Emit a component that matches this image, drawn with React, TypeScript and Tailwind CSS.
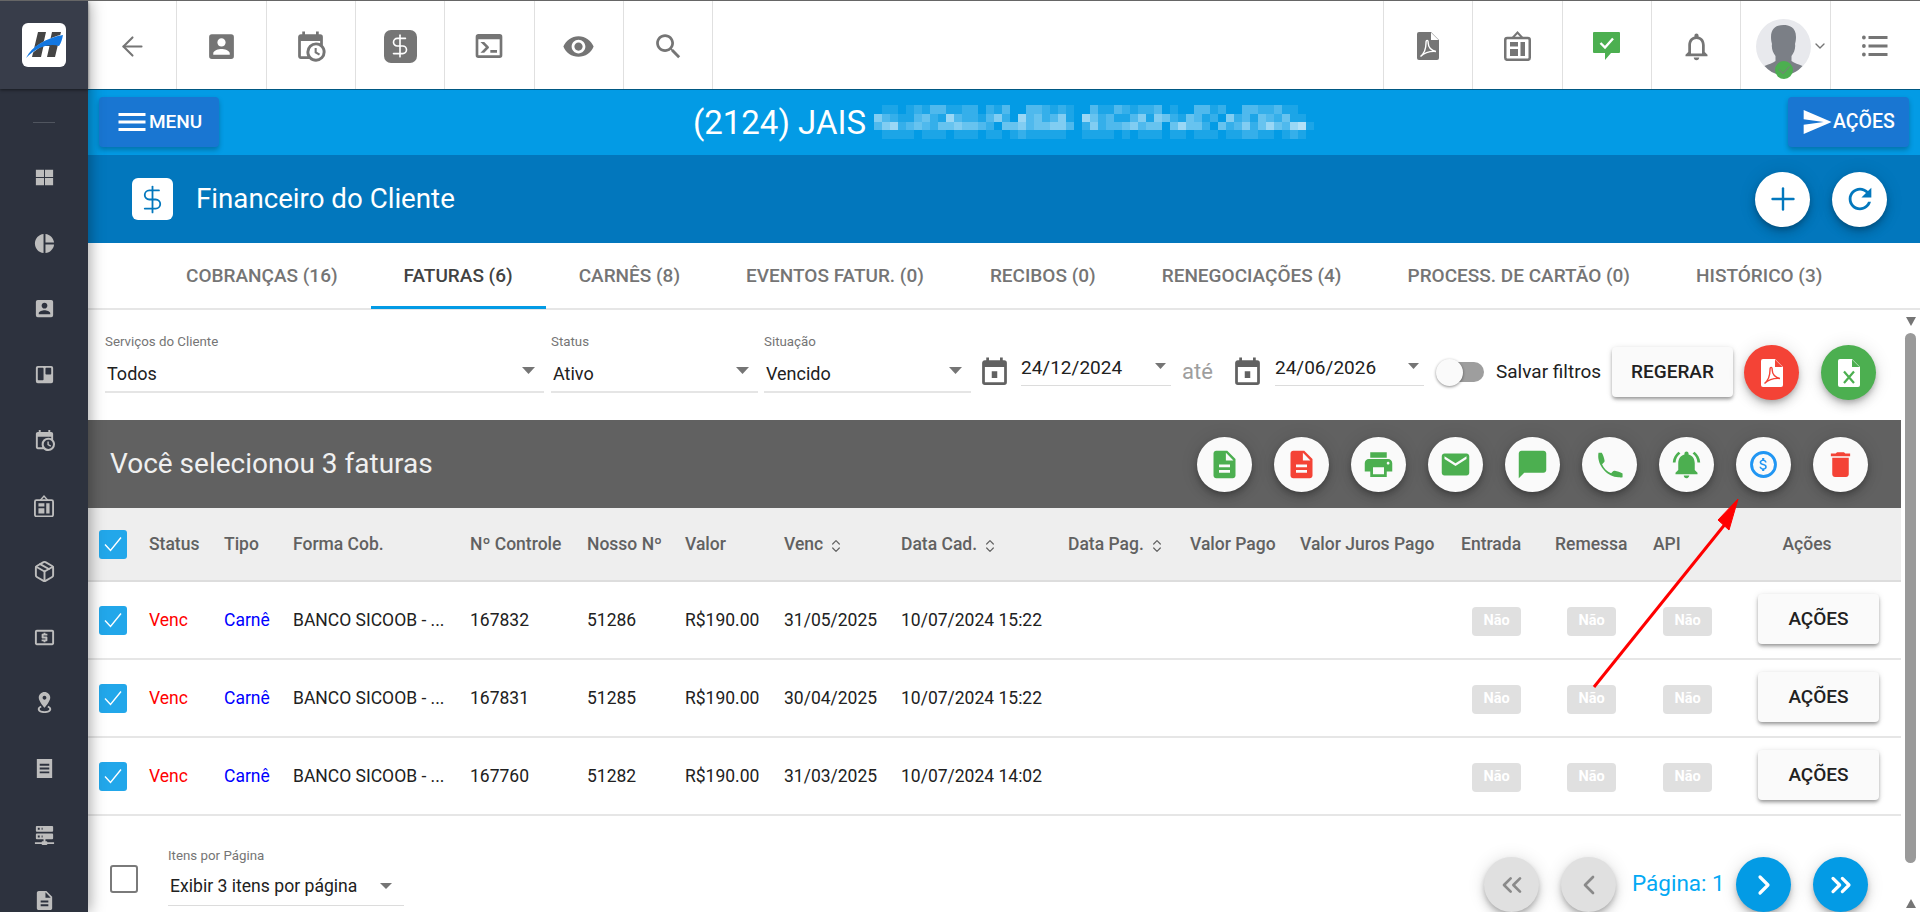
import { ArrowLeft, ChevronDown, ChevronLeft, ChevronRight, ChevronsLeft, ChevronsRight, ChevronsUpDown, DollarSign, Package, Plus } from 'lucide-react';

const P = {
  account: 'M3 5v14a2 2 0 0 0 2 2h14a2 2 0 0 0 2-2V5a2 2 0 0 0-2-2H5a2 2 0 0 0-2 2zm12 4c0 1.66-1.34 3-3 3s-3-1.34-3-3 1.34-3 3-3 3 1.34 3 3zm-9 8c0-2 4-3.1 6-3.1s6 1.1 6 3.1v1H6v-1z',
  calClock: 'M15,13H16.5V15.82L18.94,17.23L18.19,18.53L15,16.69V13M19,8H5V19H9.67C9.24,18.09 9,17.07 9,16A7,7 0 0,1 16,9C17.07,9 18.09,9.24 19,9.67V8M5,21C3.89,21 3,20.1 3,19V5C3,3.89 3.89,3 5,3H6V1H8V3H16V1H18V3H19A2,2 0 0,1 21,5V11.1C22.24,12.36 23,14.09 23,16A7,7 0 0,1 16,23C14.09,23 12.36,22.24 11.1,21H5M16,11.15A4.85,4.85 0 0,0 11.15,16C11.15,18.68 13.32,20.85 16,20.85A4.85,4.85 0 0,0 20.85,16C20.85,13.32 18.68,11.15 16,11.15Z',
  console: 'M20,19V7H4V19H20M20,3A2,2 0 0,1 22,5V19A2,2 0 0,1 20,21H4A2,2 0 0,1 2,19V5C2,3.89 2.9,3 4,3H20M13,17V15H18V17H13M9.58,13L5.57,9H8.4L11.7,12.3C12.09,12.69 12.09,13.33 11.7,13.72L8.42,17H5.59L9.58,13Z',
  eye: 'M12 4.5C7 4.5 2.73 7.61 1 12c1.73 4.39 6 7.5 11 7.5s9.27-3.11 11-7.5c-1.73-4.39-6-7.5-11-7.5zM12 17c-2.76 0-5-2.24-5-5s2.24-5 5-5 5 2.24 5 5-2.24 5-5 5zm0-8c-1.66 0-3 1.34-3 3s1.34 3 3 3 3-1.34 3-3-1.34-3-3-3z',
  search: 'M15.5 14h-.79l-.28-.27C15.41 12.59 16 11.11 16 9.5 16 5.91 13.09 3 9.5 3S3 5.91 3 9.5 5.91 16 9.5 16c1.61 0 3.09-.59 4.23-1.57l.27.28v.79l5 4.99L20.49 19l-4.99-5zm-6 0C7.01 14 5 11.99 5 9.5S7.01 5 9.5 5 14 7.01 14 9.5 11.99 14 9.5 14z',
  bell: 'M12 22c1.1 0 2-.9 2-2h-4c0 1.1.89 2 2 2zm6-6v-5c0-3.07-1.64-5.64-4.5-6.32V4c0-.83-.67-1.5-1.5-1.5s-1.5.67-1.5 1.5v.68C7.63 5.36 6 7.92 6 11v5l-2 2v1h16v-1l-2-2zm-2 1H8v-6c0-2.48 1.51-4.5 4-4.5s4 2.02 4 4.5v6z',
  menu: 'M3 18h18v-2H3v2zm0-5h18v-2H3v2zm0-7v2h18V6H3z',
  send: 'M2.01 21L23 12 2.01 3 2 10l15 2-15 2z',
  refresh: 'M17.65 6.35C16.2 4.9 14.21 4 12 4c-4.42 0-7.99 3.58-7.99 8s3.57 8 7.99 8c3.73 0 6.84-2.55 7.73-6h-2.08c-.82 2.33-3.04 4-5.65 4-3.31 0-6-2.69-6-6s2.69-6 6-6c1.66 0 3.14.69 4.22 1.78L13 11h7V4l-2.35 2.35z',
  calendar: 'M10 11h4v5h-4zM19 3h-1V1h-2v2H8V1H6v2H5C3.89 3 3 3.9 3 5v14a2 2 0 0 0 2 2h14a2 2 0 0 0 2-2V5a2 2 0 0 0-2-2zm0 16H5V8h14z',
  doc: 'M14 2H6c-1.1 0-1.99.9-1.99 2L4 20c0 1.1.89 2 2 2h12c1.1 0 2-.9 2-2V8l-6-6zm2 16H8v-2h8v2zm0-4H8v-2h8v2zm-3-5V3.5L18.5 9H13z',
  print: 'M19 8H5c-1.66 0-3 1.34-3 3v6h4v4h12v-4h4v-6c0-1.66-1.34-3-3-3zm-3 11H8v-5h8v5zm3-7c-.55 0-1-.45-1-1s.45-1 1-1 1 .45 1 1-.45 1-1 1zm-1-9H6v4h12V3z',
  mail: 'M20 4H4c-1.1 0-1.99.9-1.99 2L2 18c0 1.1.9 2 2 2h16c1.1 0 2-.9 2-2V6c0-1.1-.9-2-2-2zm0 4l-8 5-8-5V6l8 5 8-5v2z',
  chat: 'M20 2H4c-1.1 0-1.99.9-1.99 2L2 22l4-4h14c1.1 0 2-.9 2-2V4c0-1.1-.9-2-2-2z',
  phone: 'M6.4 3.500c1 1.800 1.700 3.600 2 5.600.1.700-.1 1.200-.7 1.700l-1.100 1c1.300 3 3.600 5.300 6.600 6.600l1-1.100c.5-.6 1-.8 1.700-.7 1.900.3 3.700 1 5.600 2v2.600c-1 .3-2 .2-3 .1C10.500 20.800 4.200 13.500 3.800 6.500c0-1 0-2 .2-3z',
  alarm: 'M7.58 4.08L6.15 2.65C3.75 4.48 2.17 7.3 2.03 10.5h2c.15-2.65 1.51-4.97 3.55-6.42zm12.39 6.42h2c-.15-3.2-1.73-6.02-4.12-7.85l-1.42 1.43c2.02 1.45 3.39 3.77 3.54 6.42zM18 11c0-3.07-1.64-5.64-4.5-6.32V4c0-.83-.67-1.5-1.5-1.5s-1.5.67-1.5 1.5v.68C7.63 5.36 6 7.92 6 11v5l-2 2v1h16v-1l-2-2v-5zm-6 11c.14 0 .27-.01.4-.04.65-.14 1.18-.58 1.44-1.18.1-.24.15-.5.15-.78h-4c.01 1.1.9 2 2.01 2z',
  dollar: 'M11.8 10.9c-2.27-.59-3-1.2-3-2.15 0-1.09 1.01-1.85 2.7-1.85 1.78 0 2.44.85 2.5 2.1h2.21c-.07-1.72-1.12-3.3-3.21-3.81V3h-3v2.16c-1.94.42-3.5 1.68-3.5 3.61 0 2.31 1.91 3.46 4.7 4.13 2.5.6 3 1.48 3 2.41 0 .69-.49 1.79-2.7 1.79-2.06 0-2.87-.92-2.98-2.1h-2.2c.12 2.19 1.76 3.42 3.68 3.83V21h3v-2.15c1.95-.37 3.5-1.5 3.5-3.55 0-2.84-2.43-3.81-4.7-4.4z',
  trash: 'M6 19c0 1.1.9 2 2 2h8c1.1 0 2-.9 2-2V7H6v12zM19 4h-3.5l-1-1h-5l-1 1H5v2h14V4z',
  grid: 'M3 4h8.5v7.5H3zM12.5 4H21v7.5h-8.5zM3 12.5h8.5V20H3zM12.5 12.5H21V20h-8.5z',
  pie: 'M11,2V22C5.9,21.5 2,17.2 2,12C2,6.8 5.9,2.5 11,2M13,2V11H22C21.5,6.2 17.8,2.5 13,2M13,13V22C17.7,21.5 21.5,17.8 22,13H13Z',
  trello: 'M5,3H19A2,2 0 0,1 21,5V19A2,2 0 0,1 19,21H5A2,2 0 0,1 3,19V5A2,2 0 0,1 5,3M5.8,5A0.8,0.8 0 0,0 5,5.8V17.2A0.8,0.8 0 0,0 5.8,18H10.2A0.8,0.8 0 0,0 11,17.2V5.8A0.8,0.8 0 0,0 10.2,5H5.8M13.8,5A0.8,0.8 0 0,0 13,5.8V11.2A0.8,0.8 0 0,0 13.8,12H18.2A0.8,0.8 0 0,0 19,11.2V5.8A0.8,0.8 0 0,0 18.2,5H13.8Z',
  atm: 'M11 17h2v-1h1c.55 0 1-.45 1-1v-3c0-.55-.45-1-1-1h-3v-1h4V8h-2V7h-2v1h-1c-.55 0-1 .45-1 1v3c0 .55.45 1 1 1h3v1H9v2h2v1zm9-13H4c-1.11 0-1.99.89-1.99 2L2 18c0 1.11.89 2 2 2h16c1.11 0 2-.89 2-2V6c0-1.11-.89-2-2-2zm0 14H4V6h16v12z',
  pin: 'M12 1C8.7 1 6 3.7 6 7c0 3.8 6 10.5 6 10.5S18 10.800 18 7c0-3.300-2.700-6-6-6zm0 8c-1.100 0-2-.9-2-2s.9-2 2-2 2 .9 2 2-.9 2-2 2zM8 15.500C6.200 16.300 5 17.500 5 19c0 2.500 3.100 4 7 4s7-1.500 7-4c0-1.500-1.200-2.700-3-3.500l-1 1.500c1.300.5 2 1.200 2 2 0 1.200-2.200 2-5 2s-5-.8-5-2c0-.8.7-1.500 2-2z',
  receipt: 'M4 2h16v20H4zM7 7v2h10V7zM7 11v2h10v-2zM7 15v2h10v-2z',
  server: 'M13,19H14A1,1 0 0,1 15,20H22V22H15A1,1 0 0,1 14,23H10A1,1 0 0,1 9,22H2V20H9A1,1 0 0,1 10,19H11V17H4A1,1 0 0,1 3,16V12A1,1 0 0,1 4,11H20A1,1 0 0,1 21,12V16A1,1 0 0,1 20,17H13V19M4,3H20A1,1 0 0,1 21,4V8A1,1 0 0,1 20,9H4A1,1 0 0,1 3,8V4A1,1 0 0,1 4,3M9,7H10V5H9V7M9,15H10V13H9V15M5,5V7H7V5H5M5,13V15H7V13H5Z',
};

function Mi({ d, size = 24, className = '' }: { d: string; size?: number; className?: string }) {
  return (
    <svg width={size} height={size} viewBox="0 0 24 24" fill="currentColor" className={`shrink-0 ${className}`}>
      <path fillRule="evenodd" d={d} />
    </svg>
  );
}

function FileMark({ cls, fold, kind }: { cls: string; fold: string; kind: 'pdf' | 'xls' }) {
  return (
    <svg width="22" height="28" viewBox="0 0 22 28" className={cls}>
      <path fill="currentColor" d="M2 0h12l8 8v18a2 2 0 0 1-2 2H2a2 2 0 0 1-2-2V2a2 2 0 0 1 2-2z" />
      <path fill={fold} d="M14 .5v7.500h7.500z" />
      {kind === 'pdf' ? (
        <path fill="none" stroke={fold} strokeWidth="1.400" d="M3.500 24.500c3-2.500 5.500-8 5.500-13.500 0-3.500 2.200-3.500 2.200 0 0 4 3 8 7.800 8.500-4-.3-11 .8-15.500 5z" />
      ) : (
        <path fill="none" stroke={fold} strokeWidth="2.200" d="M6 12.500l10 11.500M16 12.500L6 24" />
      )}
    </svg>
  );
}

function Bulletin({ size = 27 }: { size?: number }) {
  return (
    <svg width={size} height={(size * 30) / 27} viewBox="0 0 27 30" className="shrink-0">
      <rect x="1.250" y="7" width="24.500" height="21.800" rx="2" fill="none" stroke="currentColor" strokeWidth="2.500" />
      <path d="M8.500 7l5-5.500 5 5.500" fill="none" stroke="currentColor" strokeWidth="2" />
      <path fill="currentColor" d="M6 11h8v4.500H6zM6 18h8v7H6zM16.500 11h4.500v14h-4.500z" />
    </svg>
  );
}

function Logo() {
  return (
    <svg width="44" height="44" viewBox="0 0 44 44" className="rounded-[6px] bg-white">
      <path fill="#444444" d="M10 34L16 9h8l-2.500 11h6L30 9h9l-6 25H25l2.500-11h-6L19 34z" />
      <path fill="#fff" d="M3 36C10 24 24 15 42 11l-1 4C26 18 13 26 6 35z" />
      <path fill="#1277e1" d="M4 35C10 23 24 15 41 12c-1 5-2 8-4 11-8-3-22 0-33 12z" />
    </svg>
  );
}

function Avatar() {
  return (
    <svg width="55" height="60" viewBox="0 0 55 60" className="shrink-0">
      <circle cx="27.500" cy="27.500" r="27.500" fill="#e8e9ed" />
      <path fill="#7b7f86" d="M15 18c0-10 7-12 12.500-12S40 8 40 18c0 3-.5 5-1 7 .8 4-1 9-3.500 12v5c3 2.500 7 3 11 5-5 6-12 9-19 9s-14-3-19-9c4-2 8-2.500 11-5v-5c-2.500-3-4.300-8-3.500-12-.5-2-1-4-1-7z" />
      <circle cx="28" cy="51" r="9" fill="#4caf50" />
      <path d="M23 50.500l4 4 6.500-7" fill="none" stroke="#6d8a70" strokeWidth="1.200" />
    </svg>
  );
}

function ListMark() {
  return (
    <svg width="26" height="22" viewBox="0 0 26 22" className="shrink-0">
      <path fill="currentColor" d="M0 2.500a1.900 1.900 0 1 0 3.800 0 1.900 1.900 0 1 0-3.800 0zM0 11a1.900 1.900 0 1 0 3.800 0 1.900 1.900 0 1 0-3.800 0zM0 19.500a1.900 1.900 0 1 0 3.800 0 1.900 1.900 0 1 0-3.800 0zM6.500 1h19v3h-19zM6.500 9.500h19v3h-19zM6.500 18h19v3h-19z" />
    </svg>
  );
}

function TopCell({ children, thin }: { children: React.ReactNode; thin?: boolean }) {
  return (
    <div className={`w-[89.330px] h-full pt-[2px] flex items-center justify-center text-[#757575] ${thin ? '' : 'border-r border-[#e0e0e0]'}`}>{children}</div>
  );
}

function Triangle({ w = 13, h = 7 }: { w?: number; h?: number }) {
  return (
    <svg width={w} height={h} viewBox="0 0 13 7" preserveAspectRatio="none" className="shrink-0 text-[#757575]">
      <path d="M0 0h13L6.500 7z" fill="currentColor" />
    </svg>
  );
}

function SelectField({ label, value, className }: { label: string; value: string; className: string }) {
  return (
    <div className={`flex flex-col ${className}`}>
      <div className="h-[14px] -mt-[1px] leading-[14px] text-[13.300px] text-[#757575]">{label}</div>
      <div className="h-[44px] pt-[6px] pl-[2px] pr-[9px] flex items-center justify-between border-b-2 border-[#e5e5e5] text-[18px] text-[#212121]">
        <span>{value}</span>
        <div className="-mt-[6px]"><Triangle /></div>
      </div>
    </div>
  );
}

function DateField({ value, className }: { value: string; className: string }) {
  return (
    <div className={`h-[37px] mt-[13px] pt-[3px] pr-[5px] flex items-center justify-between border-b border-[#dcdcdc] text-[19px] text-[#212121] ${className}`}>
      <span>{value}</span>
      <div className="-mt-[6px]"><Triangle w={11} h={6} /></div>
    </div>
  );
}

const fab = 'shrink-0 w-[55px] h-[55px] rounded-full flex items-center justify-center shadow-[0_3px_5px_-1px_rgba(0,0,0,0.2),0_6px_10px_0_rgba(0,0,0,0.14),0_1px_18px_0_rgba(0,0,0,0.12)]';
const btn = 'shrink-0 w-[121px] h-[50px] rounded-[4px] bg-[#fafafa] flex items-center justify-center text-[19px] font-medium text-[#212121] shadow-[0_3px_4px_-1px_rgba(0,0,0,0.25),0_2px_3px_0_rgba(0,0,0,0.14),0_1px_6px_0_rgba(0,0,0,0.12)]';
const cols = 'grid grid-cols-[61px_75px_69px_177px_117px_98px_99px_117px_167px_122px_110px_161px_94px_98px_92px_156px] items-center';

const blur = [
  '01101213311220213003321210031132122301003312003322311000',
  '53211342163221352063423510642311351542143120523143241100',
  '35623432445443204453445530252334534404644204235246436710',
  '01111011101110110121111100111101011101101110112211012100',
];

function Check({ on }: { on: boolean }) {
  if (!on) {
    return <div className="w-[28px] h-[28px] rounded-[3px] border-2 border-[#7a7a7a] bg-white" />;
  }
  return (
    <div className="w-[28px] h-[29px] rounded-[3px] bg-[#22a7ea] flex items-center justify-center">
      <svg width="20" height="20" viewBox="0 0 20 20"><path d="M2 10.500l5.500 6L18 3.500" fill="none" stroke="#fff" strokeWidth="1.400" /></svg>
    </div>
  );
}

function Sortable({ children }: { children: string }) {
  return (
    <span className="flex items-center gap-[5px]">{children}<ChevronsUpDown size={16} strokeWidth={1.800} className="mt-[3px]" /></span>
  );
}

const rows = [
  ['167832', '51286', '31/05/2025', '10/07/2024 15:22'],
  ['167831', '51285', '30/04/2025', '10/07/2024 15:22'],
  ['167760', '51282', '31/03/2025', '10/07/2024 14:02'],
];

function Nao({ className }: { className: string }) {
  return <div className={`w-[49px] h-[29px] rounded-[4px] bg-[#e0e0e0] text-white text-[14.500px] font-bold flex items-center justify-center ${className}`}>Não</div>;
}

const sideIcons = [P.grid, P.pie, P.account, P.trello, P.calClock, 'bulletin', 'package', P.atm, P.pin, P.receipt, P.server, P.doc];

export default function App() {
  return (
    <div className="relative w-[1920px] h-[912px] overflow-hidden flex bg-white font-[family-name:Roboto,sans-serif] border-t border-[#666]">
      {/* sidebar */}
      <aside className="relative z-20 w-[88px] shrink-0 bg-[#2d323e] flex flex-col shadow-[2px_0_14px_rgba(0,0,0,0.35)]">
        <div className="h-[88px] shrink-0 bg-[#383d4a] flex items-center justify-center shadow-[0_1px_3px_rgba(0,0,0,0.5)]"><Logo /></div>
        <div className="h-[1px] w-[22px] bg-[#50555f] mx-auto mt-[33px]" />
        <div className="flex flex-col items-center gap-[41.700px] mt-[43px] text-[#bdbdbd]">
          {sideIcons.map((d, i) => (
            <div key={i} className="h-[24px] flex items-center justify-center">
              {d === 'bulletin' ? <Bulletin size={20} /> : d === 'package' ? <Package size={23} strokeWidth={2} /> : <Mi d={d} size={23} />}
            </div>
          ))}
        </div>
      </aside>

      <div className="flex-1 min-w-0 flex flex-col">
        {/* top bar */}
        <header className="h-[88px] shrink-0 flex items-center justify-between bg-white">
          <div className="flex h-full">
            <TopCell><ArrowLeft size={31} strokeWidth={1.600} /></TopCell>
            <TopCell><Mi d={P.account} size={33} /></TopCell>
            <TopCell><Mi d={P.calClock} size={33} /></TopCell>
            <TopCell>
              <div className="w-[33px] h-[33px] rounded-[7px] bg-[#757575] flex items-center justify-center text-white"><DollarSign size={26} strokeWidth={1.500} /></div>
            </TopCell>
            <TopCell><Mi d={P.console} size={32} /></TopCell>
            <TopCell><Mi d={P.eye} size={33} /></TopCell>
            <TopCell><Mi d={P.search} size={33} /></TopCell>
          </div>
          <div className="flex h-full">
            <div className="border-l border-[#e0e0e0]" />
            <TopCell><FileMark cls="text-[#757575]" fold="#fff" kind="pdf" /></TopCell>
            <TopCell><Bulletin /></TopCell>
            <TopCell>
              <svg width="27" height="28" viewBox="0 0 27 28">
                <path fill="#4caf50" d="M1 0h25a1 1 0 0 1 1 1v19a1 1 0 0 1-1 1h-8l-6 7v-7H1a1 1 0 0 1-1-1V1a1 1 0 0 1 1-1z" />
                <path d="M7.500 11l4.500 4.500 8-9" fill="none" stroke="#fff" strokeWidth="2.400" />
              </svg>
            </TopCell>
            <TopCell><Mi d={P.bell} size={33} /></TopCell>
            <TopCell>
              <div className="flex items-center -mr-[16px] -ml-[4px]">
                <div className="mt-[5px]"><Avatar /></div>
                <ChevronDown size={16} strokeWidth={2} className="ml-[1px] shrink-0" />
              </div>
            </TopCell>
            <TopCell thin><ListMark /></TopCell>
          </div>
        </header>

        {/* client bar */}
        <div className="h-[66px] shrink-0 bg-[#039be5] flex items-center px-[11px] shadow-[inset_0_1px_0_rgba(0,60,90,0.7)]">
          <div className="w-[120px] h-[50px] shrink-0 rounded-[4px] bg-[#1976d2] flex items-center pl-[15px] text-white text-[19px] font-medium shadow-[0_3px_5px_rgba(0,0,0,0.25)]">
            <Mi d={P.menu} size={36} /><span className="-ml-[1px]">MENU</span>
          </div>
          <div className="flex-1 pl-[8px] flex items-center justify-center text-white text-[33px] leading-none">
            <span>(2124) JAIS</span>
            <div className="ml-[8px] flex flex-col">
              {blur.map((r, i) => (
                <div key={i} className="flex">
                  {r.split('').map((c, j) => (
                    <div key={j} className="w-[8px] h-[8.300px] bg-white" style={{ opacity: Number(c) / 10 }} />
                  ))}
                </div>
              ))}
            </div>
          </div>
          <div className="w-[121px] h-[50px] shrink-0 rounded-[4px] bg-[#1976d2] flex items-center pl-[14px] text-white text-[19.500px] font-medium shadow-[0_3px_5px_rgba(0,0,0,0.25)]">
            <Mi d={P.send} size={32} className="-ml-[1px]" /><span>AÇÕES</span>
          </div>
        </div>

        {/* page title */}
        <div className="h-[88px] shrink-0 bg-[#0277bd] flex items-center justify-between pl-[44px] pr-[33px]">
          <div className="flex items-center">
            <div className="w-[41px] h-[42px] rounded-[6px] bg-white flex items-center justify-center text-[#0277bd]"><DollarSign size={31} strokeWidth={1.400} /></div>
            <span className="ml-[23px] text-white text-[27.700px]">Financeiro do Cliente</span>
          </div>
          <div className="flex gap-[22px]">
            <div className={`${fab} bg-white text-[#0277bd]`}><Plus size={36} strokeWidth={1.600} /></div>
            <div className={`${fab} bg-white text-[#0277bd]`}><Mi d={P.refresh} size={34} /></div>
          </div>
        </div>

        {/* tabs */}
        <nav className="h-[67px] shrink-0 bg-white border-b-2 border-[#e6e6e6] flex pl-[65px] text-[19px] font-medium text-[#757575]">
          {[
            ['COBRANÇAS (16)', 0],
            ['FATURAS (6)', 1],
            ['CARNÊS (8)', 0],
            ['EVENTOS FATUR. (0)', 0],
            ['RECIBOS (0)', 0],
            ['RENEGOCIAÇÕES (4)', 0],
            ['PROCESS. DE CARTÃO (0)', 0],
            ['HISTÓRICO (3)', 0],
          ].map(([t, a]) => (
            <div key={t as string} className={`h-[66px] px-[33px] pt-[3px] flex items-center whitespace-nowrap border-b-[3px] ${a ? 'border-[#039be5] text-[#424242]' : 'border-transparent'}`}>{t}</div>
          ))}
        </nav>

        <div className="flex-1 min-h-0 flex">
          <main className="w-[1813px] shrink-0 flex flex-col">
            {/* filters */}
            <div className="h-[110px] shrink-0 flex items-start pt-[26px]">
              <SelectField label="Serviços do Cliente" value="Todos" className="w-[439px] ml-[17px]" />
              <SelectField label="Status" value="Ativo" className="w-[207px] ml-[7px]" />
              <SelectField label="Situação" value="Vencido" className="w-[207px] ml-[6px]" />
              <Mi d={P.calendar} size={33} className="ml-[7px] mt-[20px] text-[#616161]" />
              <DateField value="24/12/2024" className="w-[150px] ml-[10px]" />
              <span className="ml-[11px] mt-[21px] w-[33px] text-[22px] leading-[30px] text-[#9e9e9e]">até</span>
              <Mi d={P.calendar} size={33} className="ml-[16px] mt-[20px] text-[#616161]" />
              <DateField value="24/06/2026" className="w-[149px] ml-[11px]" />
              <div className="relative ml-[12px] mt-[20px] w-[48px] h-[32px] flex items-center shrink-0">
                <div className="ml-[8px] w-[40px] h-[20px] rounded-full bg-[#9e9e9e]" />
                <div className="absolute left-0 top-[3px] w-[27px] h-[27px] rounded-full bg-[#fafafa] shadow-[0_1px_3px_rgba(0,0,0,0.45)]" />
              </div>
              <span className="ml-[12px] mt-[21px] w-[105px] whitespace-nowrap text-[19px] leading-[30px] text-[#212121]">Salvar filtros</span>
              <div className={`${btn} ml-[11px] mt-[11px] text-[19.500px]`}>REGERAR</div>
              <div className={`${fab} ml-[11px] mt-[9px] bg-[#f44336]`}><FileMark cls="text-white" fold="#f44336" kind="pdf" /></div>
              <div className={`${fab} ml-[22px] mt-[9px] bg-[#4caf50]`}><FileMark cls="text-white" fold="#4caf50" kind="xls" /></div>
            </div>

            {/* selection bar */}
            <div className="h-[88px] shrink-0 bg-[#616161] flex items-center justify-between pl-[22px] pr-[33px]">
              <span className="text-[28px] text-[#f0f0f0]">Você selecionou 3 faturas</span>
              <div className="flex gap-[22px]">
                <div className={`${fab} bg-[#fafafa] text-[#4caf50]`}><Mi d={P.doc} size={33} /></div>
                <div className={`${fab} bg-[#fafafa] text-[#f44336]`}><Mi d={P.doc} size={33} /></div>
                <div className={`${fab} bg-[#fafafa] text-[#4caf50]`}><Mi d={P.print} size={33} /></div>
                <div className={`${fab} bg-[#fafafa] text-[#4caf50]`}><Mi d={P.mail} size={33} /></div>
                <div className={`${fab} bg-[#fafafa] text-[#4caf50]`}><Mi d={P.chat} size={33} /></div>
                <div className={`${fab} bg-[#fafafa] text-[#4caf50]`}><Mi d={P.phone} size={33} /></div>
                <div className={`${fab} bg-[#fafafa] text-[#4caf50]`}><Mi d={P.alarm} size={33} /></div>
                <div className={`${fab} bg-[#fafafa] text-[#2196f3]`}>
                  <svg width="33" height="33" viewBox="0 0 24 24" className="shrink-0">
                    <circle cx="12" cy="12" r="8.700" fill="none" stroke="currentColor" strokeWidth="2.100" />
                    <path fill="currentColor" transform="translate(5.800 5.800) scale(0.52)" d={P.dollar} />
                  </svg>
                </div>
                <div className={`${fab} bg-[#fafafa] text-[#f44336]`}><Mi d={P.trash} size={33} /></div>
              </div>
            </div>

            {/* table */}
            <div className={`${cols} h-[74px] shrink-0 pt-[1px] bg-[#eeeeee] border-b-2 border-[#dddddd] text-[17.500px] font-medium text-[#616161]`}>
              <div className="pl-[11px] -mt-[1px]"><Check on /></div>
              <div>Status</div>
              <div>Tipo</div>
              <div>Forma Cob.</div>
              <div>Nº Controle</div>
              <div>Nosso Nº</div>
              <div>Valor</div>
              <Sortable>Venc</Sortable>
              <Sortable>Data Cad.</Sortable>
              <Sortable>Data Pag.</Sortable>
              <div>Valor Pago</div>
              <div>Valor Juros Pago</div>
              <div>Entrada</div>
              <div>Remessa</div>
              <div>API</div>
              <div className="pr-[32px] text-center">Ações</div>
            </div>
            {rows.map((r) => (
              <div key={r[0]} className={`${cols} h-[78px] shrink-0 border-b-2 border-[#e6e6e6] text-[17.500px] text-[#212121]`}>
                <div className="pl-[11px]"><Check on /></div>
                <div className="text-[#ff0000]">Venc</div>
                <div className="text-[#0000ff]">Carnê</div>
                <div>BANCO SICOOB - ...</div>
                <div>{r[0]}</div>
                <div>{r[1]}</div>
                <div>R$190.00</div>
                <div>{r[2]}</div>
                <div>{r[3]}</div>
                <div />
                <div />
                <div />
                <Nao className="ml-[11px] mt-[2px]" />
                <Nao className="ml-[12px] mt-[2px]" />
                <Nao className="ml-[10px] mt-[2px]" />
                <div className={`${btn} ml-[13px] -mt-[2px] pt-[1px]`}>AÇÕES</div>
              </div>
            ))}

            {/* footer */}
            <div className="flex-1 min-h-0 flex items-start overflow-hidden">
              <div className="ml-[22px] mt-[49px]"><Check on={false} /></div>
              <div className="ml-[30px] mt-[33px] w-[236px] flex flex-col">
                <div className="h-[14px] leading-[14px] text-[13.300px] text-[#757575]">Itens por Página</div>
                <div className="h-[43px] pt-[4px] pl-[2px] pr-[12px] flex items-center justify-between border-b border-[#dcdcdc] text-[17.600px] text-[#212121]">
                  <span>Exibir 3 itens por página</span>
                  <Triangle w={12} h={6} />
                </div>
              </div>
              <div className="ml-auto mr-[33px] mt-[41px] flex items-start">
                <div className={`${fab} bg-[#e0e0e0] text-[#8a8a8a]`}><ChevronsLeft size={32} strokeWidth={2} /></div>
                <div className={`${fab} ml-[22px] bg-[#e0e0e0] text-[#8a8a8a]`}><ChevronLeft size={32} strokeWidth={2} /></div>
                <span className="ml-[16px] mt-[11px] w-[92px] whitespace-nowrap text-[22.500px] leading-[30px] text-[#03a9f4]">Página: 1</span>
                <div className={`${fab} ml-[12px] bg-[#039be5] text-white`}><ChevronRight size={32} strokeWidth={2.400} /></div>
                <div className={`${fab} ml-[22px] bg-[#039be5] text-white`}><ChevronsRight size={32} strokeWidth={2.400} /></div>
              </div>
            </div>
          </main>

          {/* scrollbar */}
          <div className="flex-1 bg-white flex flex-col items-center pt-[7px] pb-[4px]">
            <Triangle w={10} h={9} />
            <div className="mt-[7px] w-[11px] h-[530px] rounded-full bg-[#9a9a9a]" />
            <div className="mt-auto rotate-180"><Triangle w={10} h={9} /></div>
          </div>
        </div>
      </div>

      {/* annotation arrow */}
      <svg className="absolute left-0 top-[-1px] pointer-events-none z-30" width="1920" height="912" viewBox="0 0 1920 912">
        <path d="M1594 687L1726 523" stroke="#ff0000" strokeWidth="3" fill="none" />
        <path d="M1738 499L1729 530 1718 520z" fill="#ff0000" stroke="#ff0000" strokeWidth="1" />
      </svg>
    </div>
  );
}
